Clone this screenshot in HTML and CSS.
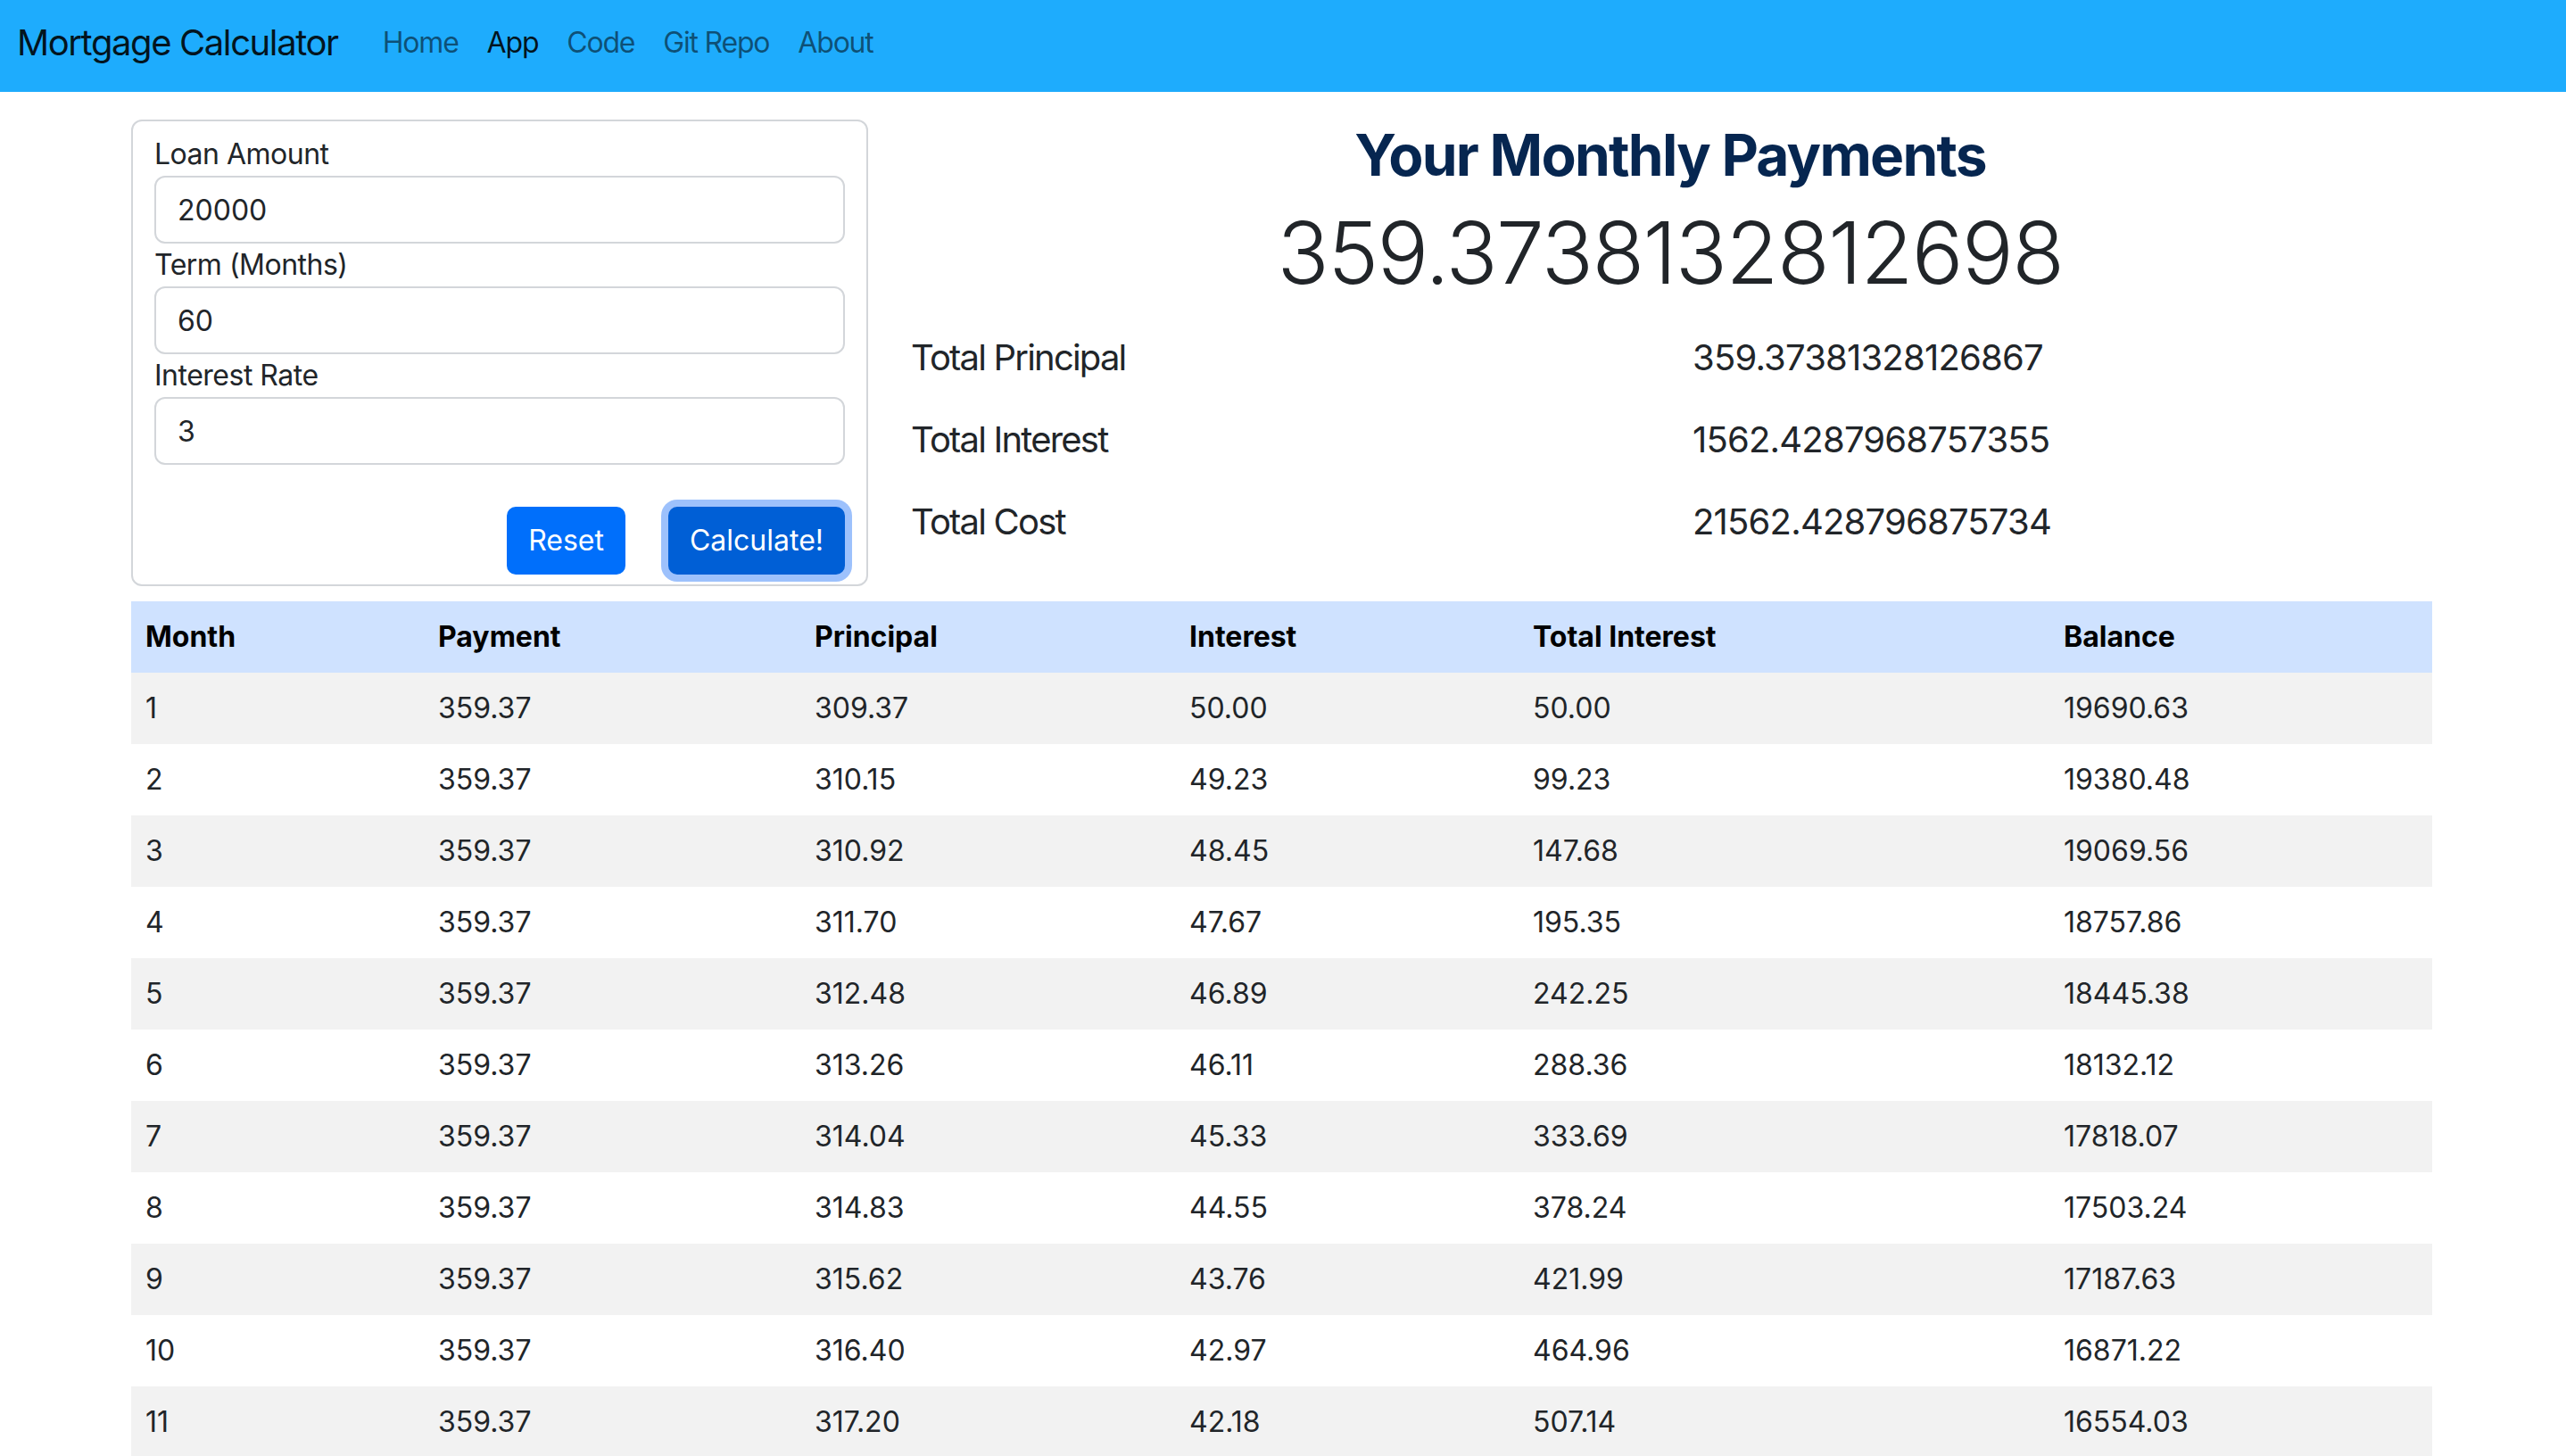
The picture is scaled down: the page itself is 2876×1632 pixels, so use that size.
FILE: index.html
```html
<!DOCTYPE html>
<html lang="en">
<head>
<meta charset="utf-8">
<title>Mortgage Calculator</title>
<link rel="stylesheet" href="styles.css">
</head>
<body>
<nav class="navbar">
  <a class="brand" href="#">Mortgage Calculator</a>
  <ul class="nav">
    <li><a class="nav-link" href="#">Home</a></li>
    <li><a class="nav-link active" href="#">App</a></li>
    <li><a class="nav-link" href="#">Code</a></li>
    <li><a class="nav-link" href="#">Git Repo</a></li>
    <li><a class="nav-link" href="#">About</a></li>
  </ul>
</nav>

<main class="container">
  <div class="top-row">
    <form class="card">
      <label class="form-label" for="loan">Loan Amount</label>
      <input class="form-control" id="loan" type="text" value="20000">
      <label class="form-label" for="term">Term (Months)</label>
      <input class="form-control" id="term" type="text" value="60">
      <label class="form-label" for="rate">Interest Rate</label>
      <input class="form-control" id="rate" type="text" value="3">
      <div class="actions">
        <button type="button" class="btn">Reset</button>
        <button type="button" class="btn btn-focus">Calculate!</button>
      </div>
    </form>

    <section class="results">
      <h2 class="results-title">Your Monthly Payments</h2>
      <div class="monthly">359.3738132812698</div>
      <div class="totals">
        <div class="total-label">Total Principal</div>
        <div class="total-value">359.37381328126867</div>
        <div class="total-label">Total Interest</div>
        <div class="total-value">1562.4287968757355</div>
        <div class="total-label">Total Cost</div>
        <div class="total-value">21562.428796875734</div>
      </div>
    </section>
  </div>

  <table class="schedule">
    <colgroup>
      <col class="c-month"><col class="c-payment"><col class="c-principal"><col class="c-interest"><col class="c-total"><col class="c-balance">
    </colgroup>
    <thead>
      <tr><th>Month</th><th>Payment</th><th>Principal</th><th>Interest</th><th>Total Interest</th><th>Balance</th></tr>
    </thead>
    <tbody>
      <tr><td>1</td><td>359.37</td><td>309.37</td><td>50.00</td><td>50.00</td><td>19690.63</td></tr>
      <tr><td>2</td><td>359.37</td><td>310.15</td><td>49.23</td><td>99.23</td><td>19380.48</td></tr>
      <tr><td>3</td><td>359.37</td><td>310.92</td><td>48.45</td><td>147.68</td><td>19069.56</td></tr>
      <tr><td>4</td><td>359.37</td><td>311.70</td><td>47.67</td><td>195.35</td><td>18757.86</td></tr>
      <tr><td>5</td><td>359.37</td><td>312.48</td><td>46.89</td><td>242.25</td><td>18445.38</td></tr>
      <tr><td>6</td><td>359.37</td><td>313.26</td><td>46.11</td><td>288.36</td><td>18132.12</td></tr>
      <tr><td>7</td><td>359.37</td><td>314.04</td><td>45.33</td><td>333.69</td><td>17818.07</td></tr>
      <tr><td>8</td><td>359.37</td><td>314.83</td><td>44.55</td><td>378.24</td><td>17503.24</td></tr>
      <tr><td>9</td><td>359.37</td><td>315.62</td><td>43.76</td><td>421.99</td><td>17187.63</td></tr>
      <tr><td>10</td><td>359.37</td><td>316.40</td><td>42.97</td><td>464.96</td><td>16871.22</td></tr>
      <tr><td>11</td><td>359.37</td><td>317.20</td><td>42.18</td><td>507.14</td><td>16554.03</td></tr>
    </tbody>
  </table>
</main>
</body>
</html>
```

FILE: styles.css
```css
* {
  box-sizing: border-box;
}

html, body {
  margin: 0;
  padding: 0;
}

body {
  font-family: "Inter", "Liberation Sans", sans-serif;
  font-size: 32px;
  line-height: 1.5;
  color: #212529;
  background: #ffffff;
}

/* Navbar */
.navbar {
  display: flex;
  align-items: center;
  height: 103px;
  padding: 0 19px 7px;
  background: #1eacfd;
}

.brand {
  font-size: 40px;
  line-height: 60px;
  letter-spacing: -1.4px;
  color: rgba(0, 0, 0, 0.9);
  text-decoration: none;
  margin-right: 34px;
}

.nav {
  display: flex;
  list-style: none;
  margin: 0;
  padding: 0;
}

.nav-link {
  display: block;
  padding: 0 16px;
  line-height: 48px;
  letter-spacing: -1.2px;
  color: rgba(0, 0, 0, 0.55);
  text-decoration: none;
}

.nav-link.active {
  color: rgba(0, 0, 0, 0.9);
}

/* Layout */
.container {
  width: 2579px;
  margin: 31px 0 0 147px;
}

.top-row {
  display: flex;
  align-items: flex-start;
}

/* Form card */
.card {
  width: 826px;
  flex: none;
  border: 2px solid #d3d6da;
  border-radius: 12px;
  padding: 13px 24px 11px;
  margin: 0;
}

.form-label {
  display: block;
  line-height: 48px;
  letter-spacing: -0.5px;
}

.form-control {
  display: block;
  width: 100%;
  height: 76px;
  padding: 0 24px;
  font: inherit;
  color: #212529;
  background: #fff;
  border: 2px solid #d3d6da;
  border-radius: 12px;
  outline: none;
}

.actions {
  display: flex;
  justify-content: flex-end;
  gap: 48px;
  margin-top: 47px;
}

.btn {
  height: 76px;
  padding: 0 24px;
  font: inherit;
  color: #fff;
  background: #006ffb;
  border: none;
  border-radius: 10px;
  cursor: pointer;
}

.btn-focus {
  background: #005fd6;
  box-shadow: 0 0 0 8px #9dc1fc;
}

/* Results */
.results {
  flex: 1;
  margin-left: 23px;
  padding-left: 22px;
}

.results-title {
  margin: 2px 0 13px;
  font-size: 64px;
  font-weight: 700;
  line-height: 1.2;
  letter-spacing: -1.75px;
  text-align: center;
  color: #062650;
}

.monthly {
  font-size: 96px;
  font-weight: 300;
  line-height: 1.2;
  letter-spacing: -1.5px;
  text-align: center;
  color: #212529;
}

.totals {
  display: grid;
  grid-template-columns: 879px 1fr;
  margin-top: 14px;
  font-size: 40px;
  line-height: 60px;
}

.total-label,
.total-value {
  padding: 16px 0;
}

.total-label {
  padding-left: 3px;
  letter-spacing: -1.8px;
}

.total-value {
  letter-spacing: -0.8px;
}

/* Table */
.schedule {
  width: 2579px;
  margin-top: 17px;
  border-collapse: collapse;
  table-layout: fixed;
}

.c-month { width: 328px; }
.c-payment { width: 422px; }
.c-principal { width: 420px; }
.c-interest { width: 385px; }
.c-total { width: 595px; }
.c-balance { width: 429px; }

.schedule th,
.schedule td {
  height: 80px;
  padding: 0 16px;
  text-align: left;
  vertical-align: middle;
  white-space: nowrap;
}

.schedule thead th {
  background: #cfe2ff;
  font-weight: 700;
  color: #000;
}

.schedule tbody tr:nth-child(odd) td {
  background: #f2f2f2;
}
```
